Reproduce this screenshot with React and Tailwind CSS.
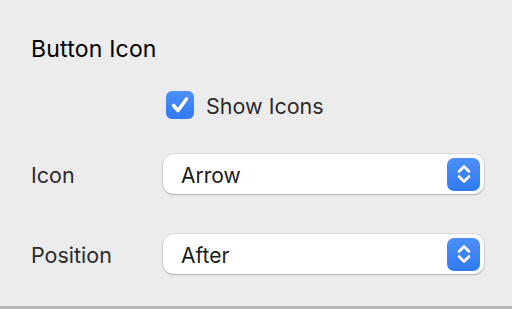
import React from 'react';

const Stepper = () => (
  <div className="w-[33px] h-[33px] rounded-[7px] bg-gradient-to-b from-[#4c8ff9] to-[#2f79f4] flex items-center justify-center">
    <svg width="16" height="24" viewBox="0 0 16 24" fill="none" stroke="white" strokeWidth="2.6" strokeLinecap="round" strokeLinejoin="round">
      <path d="M3 9.5 L8 4.5 L13 9.5" />
      <path d="M3 14.5 L8 19.5 L13 14.5" />
    </svg>
  </div>
);

const Select = ({ value }) => (
  <div className="w-[321px] h-[40px] bg-white rounded-[10px] shadow-[0_0_0_0.5px_rgba(0,0,0,0.12),0_1px_2px_rgba(0,0,0,0.22)] flex items-center justify-between pl-[18px] pr-[4px]">
    <span className="pt-[3px] text-[21px] text-[#1a1a1a]">{value}</span>
    <Stepper />
  </div>
);

const Row = ({ label, value, className }) => (
  <div className={`flex items-center h-[40px] ${className}`}>
    <span className="w-[132px] pt-[3px] text-[21.5px] text-[#2b2b2b]">{label}</span>
    <Select value={value} />
  </div>
);

export default function App() {
  return (
    <div
      className="w-[512px] h-[309px] bg-[#ececec] border-b-[3px] border-[#b5b5b5] pl-[31px] pt-[34px] box-border overflow-hidden"
      style={{ fontFamily: 'Inter, "Liberation Sans", sans-serif' }}
    >
      <div className="h-[28px] pt-[3px] flex items-center text-[23px] tracking-[0.2px] text-black">Button Icon</div>

      <div className="mt-[29px] h-[28px] flex items-center pl-[135px]">
        <div className="w-[28px] h-[28px] rounded-[6px] bg-gradient-to-b from-[#4c8ff9] to-[#2f79f4] flex items-center justify-center">
          <svg width="22" height="22" viewBox="0 0 22 22" fill="none" stroke="white" strokeWidth="3.6" strokeLinecap="round" strokeLinejoin="round">
            <path d="M4.5 11.5 L9 16.5 L17.5 5" />
          </svg>
        </div>
        <span className="ml-[12px] pt-[3px] text-[21.5px] text-[#2b2b2b]">Show Icons</span>
      </div>

      <Row label="Icon" value="Arrow" className="mt-[35px]" />
      <Row label="Position" value="After" className="mt-[40px]" />
    </div>
  );
}
